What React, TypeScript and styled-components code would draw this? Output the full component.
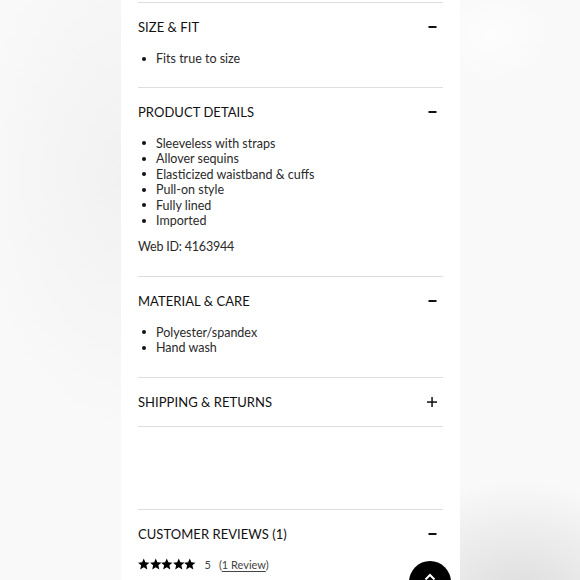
import React from 'react';
import styled, { createGlobalStyle } from 'styled-components';

const GlobalStyle = createGlobalStyle`
  html, body {
    margin: 0;
    padding: 0;
    height: 100%;
  }
  body {
    font-family: Lato, 'Open Sans', sans-serif;
    -webkit-font-smoothing: antialiased;
  }
  #root {
    height: 100%;
  }
`;

const Page = styled.div`
  height: 580px;
  overflow: hidden;
  display: grid;
  grid-template-columns: 121px 339px 1fr;
  background:
    radial-gradient(ellipse 150px 260px at 125px 175px, #f1f1f1 0%, rgba(241, 241, 241, 0) 100%),
    radial-gradient(ellipse 150px 120px at 520px 600px, #dcdcdc 0%, rgba(220, 220, 220, 0) 100%),
    radial-gradient(ellipse 60px 45px at 490px 35px, #fdfdfd 0%, rgba(253, 253, 253, 0) 100%),
    #f9f9f9;
`;

const Panel = styled.main`
  grid-column: 2;
  position: relative;
  background: #fff;
  padding: 2px 17px 0;
`;

const Section = styled.section`
  border-top: 1.5px solid #dedede;
`;

const Header = styled.div`
  height: 48px;
  display: flex;
  align-items: center;
  justify-content: space-between;
`;

const Title = styled.h3`
  margin: 0;
  font-size: 13px;
  font-weight: 400;
  letter-spacing: 0.05px;
  color: #111;
  text-transform: uppercase;
`;

const Toggle = styled.span`
  width: 10px;
  height: 10px;
  margin-right: 6px;
  display: flex;
  align-items: center;
  justify-content: center;
`;

const Body = styled.div<{ $pad: number }>`
  padding-bottom: ${p => p.$pad}px;
  font-size: 12.5px;
  line-height: 15.5px;
  color: #2a2a2a;
`;

const List = styled.ul`
  margin: 0;
  padding: 0;
  list-style: none;
`;

const Item = styled.li`
  display: flex;
  align-items: center;

  &::before {
    content: '';
    width: 4px;
    height: 4px;
    border-radius: 50%;
    background: #111;
    margin: 0 10px 0 4px;
  }
`;

const Note = styled.p`
  margin: 10.5px 0 0;
  letter-spacing: -0.2px;
`;

const Spacer = styled.div`
  height: 82px;
`;

const Rating = styled.div`
  display: flex;
  align-items: center;
  gap: 7px;
  font-size: 11px;
  color: #444;
`;

const Stars = styled.span`
  display: flex;
  gap: 0;
  margin-right: 2px;
`;

const ReviewLink = styled.span`
  color: #444;
  margin-left: 1px;

  u {
    text-underline-offset: 2px;
  }
`;

const TopButton = styled.button`
  position: absolute;
  left: 288px;
  top: 561px;
  width: 42px;
  height: 42px;
  padding: 0;
  border: none;
  border-radius: 50%;
  background: #000;
  display: flex;
  justify-content: center;
  align-items: flex-start;
  padding-top: 12px;
`;

function Minus() {
  return (
    <svg width="9" height="10" viewBox="0 0 9 10">
      <rect x="0.5" y="4" width="8" height="2" fill="#111" />
    </svg>
  );
}

function Plus() {
  return (
    <svg width="10" height="10" viewBox="0 0 10 10">
      <rect x="0" y="4.3" width="10" height="1.5" fill="#111" />
      <rect x="4.3" y="0" width="1.5" height="10" fill="#111" />
    </svg>
  );
}

function Star() {
  return (
    <svg width="11.5" height="12" viewBox="1 1 22 22">
      <path d="M12 1.5l3.1 7.2 7.8.7-5.9 5.2 1.8 7.7L12 18.2l-6.8 4.1 1.8-7.7-5.9-5.2 7.8-.7z" fill="#000" />
    </svg>
  );
}

const sections = [
  { title: 'Size & Fit', items: ['Fits true to size'], pad: 20 },
  {
    title: 'Product Details',
    items: [
      'Sleeveless with straps',
      'Allover sequins',
      'Elasticized waistband & cuffs',
      'Pull-on style',
      'Fully lined',
      'Imported',
    ],
    note: 'Web ID: 4163944',
    pad: 21,
  },
  { title: 'Material & Care', items: ['Polyester/spandex', 'Hand wash'], pad: 21 },
];

export default function App() {
  return (
    <>
      <GlobalStyle />
      <Page>
        <Panel>
          {sections.map(s => (
            <Section key={s.title}>
              <Header>
                <Title>{s.title}</Title>
                <Toggle>
                  <Minus />
                </Toggle>
              </Header>
              <Body $pad={s.pad}>
                <List>
                  {s.items.map(i => (
                    <Item key={i}>{i}</Item>
                  ))}
                </List>
                {s.note && <Note>{s.note}</Note>}
              </Body>
            </Section>
          ))}
          <Section>
            <Header>
              <Title>Shipping &amp; Returns</Title>
              <Toggle>
                <Plus />
              </Toggle>
            </Header>
          </Section>
          <Section>
            <Spacer />
          </Section>
          <Section>
            <Header>
              <Title>Customer Reviews (1)</Title>
              <Toggle>
                <Minus />
              </Toggle>
            </Header>
            <Rating>
              <Stars>
                {[0, 1, 2, 3, 4].map(i => (
                  <Star key={i} />
                ))}
              </Stars>
              <span>5</span>
              <ReviewLink>
                (<u>1 Review</u>)
              </ReviewLink>
            </Rating>
          </Section>
          <TopButton aria-label="Back to top">
            <svg width="12" height="8" viewBox="0 0 12 8">
              <path d="M1.5 6.5L6 2l4.5 4.5" stroke="#fff" strokeWidth="2" fill="none" />
            </svg>
          </TopButton>
        </Panel>
      </Page>
    </>
  );
}
